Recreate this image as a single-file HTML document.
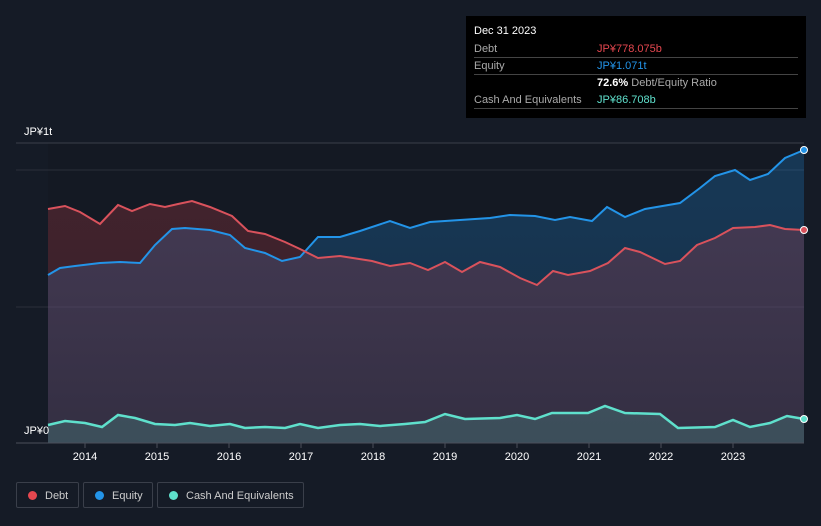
<!DOCTYPE html>
<html><head><meta charset="utf-8"><style>
body{margin:0;background:#151b26;width:821px;height:526px;overflow:hidden;font-family:"Liberation Sans",sans-serif;position:relative}
.tip{position:absolute;left:466px;top:16px;width:340px;height:102px;background:#000;color:#fff;font-size:11px}
.tip .r{position:absolute;left:8px;right:8px;border-bottom:1px solid #444;height:17px}
.tip .l{position:absolute;left:0;top:3px;color:#aaa}
.tip .v{position:absolute;left:123px;top:3px}
.leg{position:absolute;top:482px;height:26px;border:1px solid #3a3f4a;border-radius:2px;color:#ccc;font-size:11px;line-height:26px;box-sizing:border-box}
.leg i{display:inline-block;width:9px;height:9px;border-radius:50%;margin:0 8px 0 11px;vertical-align:-1px}
.ax{position:absolute;color:#fff;font-size:11px}
</style></head><body>
<svg width="821" height="526" style="position:absolute;left:0;top:0">
<defs><linearGradient id="dk" x1="0" y1="0" x2="0" y2="1"><stop offset="0" stop-color="#141923" stop-opacity="0"/><stop offset="1" stop-color="#141923" stop-opacity="0.35"/></linearGradient></defs>
<rect x="48" y="143" width="756" height="300" fill="#141923"/>
<line x1="16" y1="143" x2="804" y2="143" stroke="#3a3f4a"/>
<line x1="16" y1="170" x2="804" y2="170" stroke="#2a2f3a"/>
<line x1="16" y1="307" x2="804" y2="307" stroke="#2a2f3a"/>
<polygon fill="rgba(33,150,243,0.24)" points="48,443 48,275 60,268 75,266 100,263 120,262 140,263 155,245 172,229 185,228 210,230 230,235 245,248 265,253 282,261 300,257 318,237 340,237 360,231 390,221 410,228 430,222 460,220 490,218 510,215 535,216 555,220 570,217 592,221 607,207 625,217 645,209 680,203 700,188 715,176 735,170 750,180 768,174 785,158 804,150 804,443"/>
<polygon fill="rgba(233,75,80,0.22)" points="48,443 48,209 65,206 80,212 100,224 118,205 132,211 150,204 165,207 178,204 192,201 210,207 232,216 248,231 265,234 285,242 300,249 318,258 340,256 372,261 390,266 410,263 428,270 445,262 462,272 480,262 500,267 520,278 537,285 553,271 568,275 590,271 608,263 625,248 640,252 665,264 680,261 697,245 715,238 733,228 755,227 770,225 785,229 804,230 804,443"/>
<rect x="48" y="200" width="756" height="243" fill="url(#dk)"/>
<polygon fill="rgba(100,220,200,0.18)" points="48,443 48,425 65,421 85,423 102,427 118,415 135,418 155,424 175,425 190,423 210,426 230,424 245,428 265,427 285,428 300,424 318,428 340,425 360,424 380,426 405,424 425,422 445,414 465,419 500,418 517,415 535,419 552,413 588,413 605,406 625,413 660,414 678,428 715,427 733,420 750,427 770,423 787,416 804,419 804,443"/>
<polyline fill="none" stroke="#2394e8" stroke-width="2" points="48,275 60,268 75,266 100,263 120,262 140,263 155,245 172,229 185,228 210,230 230,235 245,248 265,253 282,261 300,257 318,237 340,237 360,231 390,221 410,228 430,222 460,220 490,218 510,215 535,216 555,220 570,217 592,221 607,207 625,217 645,209 680,203 700,188 715,176 735,170 750,180 768,174 785,158 804,150"/>
<polyline fill="none" stroke="#d9525c" stroke-width="2" points="48,209 65,206 80,212 100,224 118,205 132,211 150,204 165,207 178,204 192,201 210,207 232,216 248,231 265,234 285,242 300,249 318,258 340,256 372,261 390,266 410,263 428,270 445,262 462,272 480,262 500,267 520,278 537,285 553,271 568,275 590,271 608,263 625,248 640,252 665,264 680,261 697,245 715,238 733,228 755,227 770,225 785,229 804,230"/>
<polyline fill="none" stroke="#5fe0cc" stroke-width="2.5" points="48,425 65,421 85,423 102,427 118,415 135,418 155,424 175,425 190,423 210,426 230,424 245,428 265,427 285,428 300,424 318,428 340,425 360,424 380,426 405,424 425,422 445,414 465,419 500,418 517,415 535,419 552,413 588,413 605,406 625,413 660,414 678,428 715,427 733,420 750,427 770,423 787,416 804,419"/>
<line x1="16" y1="443" x2="804" y2="443" stroke="#4a4f5a"/>
<g stroke="#4a4f5a"><line x1="85" y1="443" x2="85" y2="448"/><line x1="157" y1="443" x2="157" y2="448"/><line x1="229" y1="443" x2="229" y2="448"/><line x1="301" y1="443" x2="301" y2="448"/><line x1="373" y1="443" x2="373" y2="448"/><line x1="445" y1="443" x2="445" y2="448"/><line x1="517" y1="443" x2="517" y2="448"/><line x1="589" y1="443" x2="589" y2="448"/><line x1="661" y1="443" x2="661" y2="448"/><line x1="733" y1="443" x2="733" y2="448"/></g>
<circle cx="804" cy="150" r="3.5" fill="#2394e8" stroke="#fff"/>
<circle cx="804" cy="230" r="3.5" fill="#d9525c" stroke="#fff"/>
<circle cx="804" cy="419" r="3.5" fill="#5fe0cc" stroke="#fff"/>
<g fill="#fff" font-size="11" font-family="Liberation Sans" text-anchor="middle"><text x="85" y="460">2014</text><text x="157" y="460">2015</text><text x="229" y="460">2016</text><text x="301" y="460">2017</text><text x="373" y="460">2018</text><text x="445" y="460">2019</text><text x="517" y="460">2020</text><text x="589" y="460">2021</text><text x="661" y="460">2022</text><text x="733" y="460">2023</text></g>
</svg>
<div class="ax" style="left:24px;top:126px">JP¥1t</div>
<div class="ax" style="left:24px;top:425px">JP¥0</div>
<div class="tip">
<div style="position:absolute;left:8px;top:9px;font-size:11px">Dec 31 2023</div>
<div class="r" style="top:24px"><span class="l">Debt</span><span class="v" style="color:#e5474f">JP¥778.075b</span></div>
<div class="r" style="top:41px"><span class="l">Equity</span><span class="v" style="color:#2394e8">JP¥1.071t</span></div>
<div class="r" style="top:58px;border:none"><span class="v"><b>72.6%</b> <span style="color:#aaa">Debt/Equity Ratio</span></span></div>
<div class="r" style="top:75px"><span class="l">Cash And Equivalents</span><span class="v" style="color:#5fe0cc">JP¥86.708b</span></div>
</div>
<div class="leg" style="left:16px;width:63px"><i style="background:#e5474f"></i>Debt</div>
<div class="leg" style="left:83px;width:70px"><i style="background:#2394e8"></i>Equity</div>
<div class="leg" style="left:157px;width:147px"><i style="background:#5fe0cc"></i>Cash And Equivalents</div>
</body></html>
